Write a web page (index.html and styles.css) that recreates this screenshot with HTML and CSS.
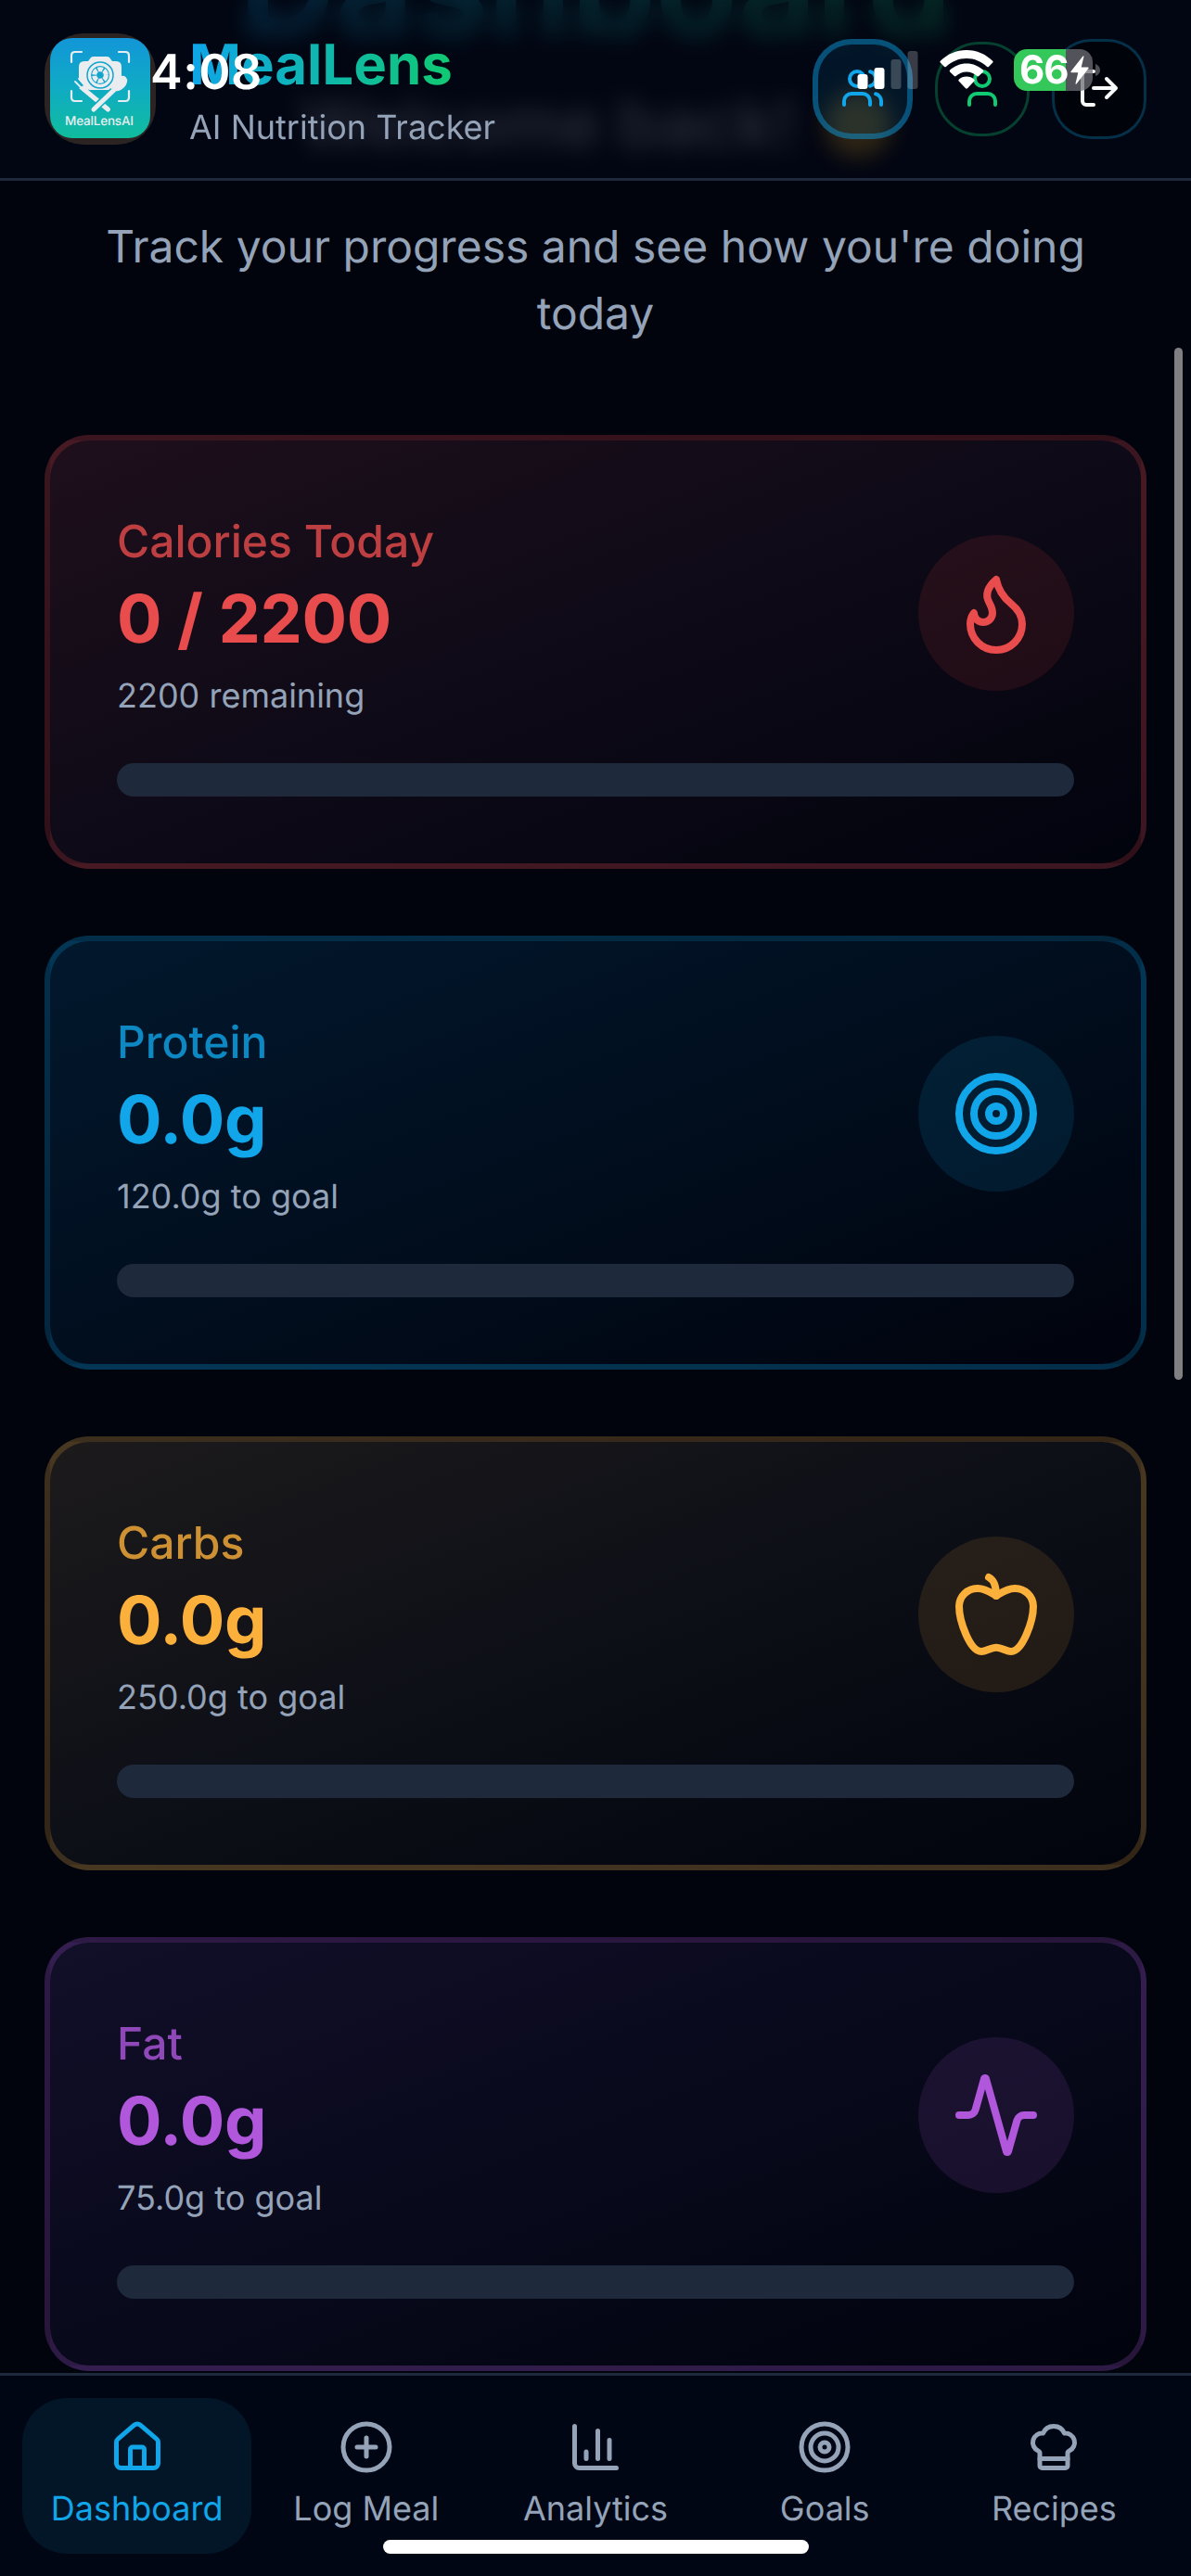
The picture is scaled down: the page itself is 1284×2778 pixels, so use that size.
FILE: index.html
```html
<!DOCTYPE html>
<html lang="en">
<head>
<meta charset="utf-8">
<title>MealLens</title>
<link rel="stylesheet" href="styles.css">
</head>
<body>
<div class="screen">
  <main class="content">
    <h1 class="page-title"><span class="page-title-text">Dashboard</span></h1>
    <p class="welcome">Welcome back! <span class="wave"></span></p>
    <p class="intro">Track your progress and see how you're doing today</p>

    <div class="cards">
      <section class="card card-red">
        <div class="card-top">
          <div class="card-text">
            <h2 class="card-label">Calories Today</h2>
            <p class="card-value">0 / 2200</p>
            <p class="card-note">2200 remaining</p>
          </div>
          <div class="card-icon"><svg class="icon" viewBox="0 0 24 24"><path d="M8.5 14.5A2.5 2.5 0 0 0 11 12c0-1.38-.5-2-1-3-1.072-2.143-.224-4.054 2-6 .5 2.5 2 4.9 4 6.5 2 1.6 3 3.5 3 5.5a7 7 0 1 1-14 0c0-1.153.433-2.294 1-3a2.5 2.5 0 0 0 2.5 2.5z"/></svg></div>
        </div>
        <div class="progress"></div>
      </section>

      <section class="card card-blue">
        <div class="card-top">
          <div class="card-text">
            <h2 class="card-label">Protein</h2>
            <p class="card-value">0.0g</p>
            <p class="card-note">120.0g to goal</p>
          </div>
          <div class="card-icon"><svg class="icon" viewBox="0 0 24 24"><circle cx="12" cy="12" r="10"/><circle cx="12" cy="12" r="6"/><circle cx="12" cy="12" r="2"/></svg></div>
        </div>
        <div class="progress"></div>
      </section>

      <section class="card card-orange">
        <div class="card-top">
          <div class="card-text">
            <h2 class="card-label">Carbs</h2>
            <p class="card-value">0.0g</p>
            <p class="card-note">250.0g to goal</p>
          </div>
          <div class="card-icon"><svg class="icon" viewBox="0 0 24 24"><path d="M12 20.94c1.5 0 2.75 1.06 4 1.06 3 0 6-8 6-12.22A4.91 4.91 0 0 0 17 5c-2.22 0-4 1.44-5 2-1-.56-2.78-2-5-2a4.9 4.9 0 0 0-5 4.78C2 14 5 22 8 22c1.25 0 2.5-1.06 4-1.06Z"/><path d="M10 2c1 .5 2 2 2 5"/></svg></div>
        </div>
        <div class="progress"></div>
      </section>

      <section class="card card-purple">
        <div class="card-top">
          <div class="card-text">
            <h2 class="card-label">Fat</h2>
            <p class="card-value">0.0g</p>
            <p class="card-note">75.0g to goal</p>
          </div>
          <div class="card-icon"><svg class="icon" viewBox="0 0 24 24"><path d="M22 12h-2.48a2 2 0 0 0-1.93 1.46l-2.35 8.36a.25.25 0 0 1-.48 0L9.24 2.18a.25.25 0 0 0-.48 0l-2.35 8.36A2 2 0 0 1 4.49 12H2"/></svg></div>
        </div>
        <div class="progress"></div>
      </section>
    </div>
  </main>

  <header class="header">
    <div class="brand">
      <div class="logo">
        <svg class="logo-art" viewBox="0 0 108 108">
          <defs>
            <linearGradient id="logoBg" x1="0" y1="0" x2="0" y2="1">
              <stop offset="0" stop-color="#1296d8"/>
              <stop offset="0.5" stop-color="#0fabc4"/>
              <stop offset="1" stop-color="#10bd9d"/>
            </linearGradient>
          </defs>
          <rect width="108" height="108" rx="24" fill="url(#logoBg)"/>
          <g fill="none" stroke="#e9edf0" stroke-width="2.2" stroke-linecap="round">
            <path d="M23 26v-7q0-4 4-4h7M74 15h7q4 0 4 4v7M85 57v7q0 4-4 4h-7M34 68h-7q-4 0-4-4v-7"/>
          </g>
          <path d="M37 25h4l3-4q1-1 3-1h14q2 0 3 1l3 4h4q6 0 6 6v10L66 56H42L31 45V31q0-6 6-6z" fill="#e9edf0"/>
          <circle cx="54" cy="40" r="14" fill="#e9edf0" stroke="#11a5cd" stroke-width="1.5"/>
          <circle cx="54" cy="40" r="10" fill="#11a5cd"/>
          <circle cx="54" cy="40" r="6.3" fill="none" stroke="#e9edf0" stroke-width="5" stroke-dasharray="5.4 1.2"/>
          <path d="M36 55l26.500 22" stroke="#e9edf0" stroke-width="5" stroke-linecap="round"/>
          <path d="M27 47l7 7M31 44l6 7M35 42l5 7" stroke="#e9edf0" stroke-width="1.800" stroke-linecap="round"/>
          <path d="M31 54q5 5 9 3q3-3 0-8z" fill="#e9edf0"/>
          <path d="M68 57L51 73" stroke="#10afc0" stroke-width="8"/>
          <path d="M70 55L47 77" stroke="#e9edf0" stroke-width="5" stroke-linecap="round"/>
          <ellipse cx="75" cy="49" rx="9.500" ry="6.500" transform="rotate(-45 75 49)" fill="#e9edf0"/>
          <text class="logo-name" x="53" y="94" text-anchor="middle" textLength="74">MealLensAI</text>
        </svg>
      </div>
      <div class="brand-text">
        <div class="brand-name">MealLens</div>
        <div class="brand-sub">AI Nutrition Tracker</div>
      </div>
    </div>
    <div class="actions">
      <button class="action action-users"><svg class="icon" viewBox="0 0 24 24"><path d="M16 21v-2a4 4 0 0 0-4-4H6a4 4 0 0 0-4 4v2"/><circle cx="9" cy="7" r="4"/><path d="M22 21v-2a4 4 0 0 0-3-3.870M16 3.130a4 4 0 0 1 0 7.750"/></svg></button>
      <button class="action action-user"><svg class="icon" viewBox="0 0 24 24"><path d="M19 21v-2a4 4 0 0 0-4-4H9a4 4 0 0 0-4 4v2"/><circle cx="12" cy="7" r="4"/></svg></button>
      <button class="action action-logout"><svg class="icon" viewBox="0 0 24 24"><path d="M9 21H5a2 2 0 0 1-2-2V5a2 2 0 0 1 2-2h4M16 17l5-5-5-5M21 12H9"/></svg></button>
    </div>
  </header>

  <div class="status">
    <div class="clock">4:08</div>
    <svg class="signal" viewBox="0 0 66 42"><rect x="0.500" y="25" width="11" height="16" rx="3" fill="#fff"/><rect x="18.500" y="18" width="11" height="23" rx="3" fill="#fff"/><rect x="36.500" y="9" width="11" height="32" rx="3" fill="#fff" fill-opacity=".22"/><rect x="54.500" y="0" width="11" height="41" rx="3" fill="#fff" fill-opacity=".22"/></svg>
    <svg class="wifi" viewBox="0 0 58 42"><path fill="#fff" d="M29 0C18 0 8 4.500 .8 11.800q-.8.900 0 1.800l4.300 4.300q.9.800 1.800 0C12.700 12.400 20.500 9 29 9s16.300 3.400 22.100 8.900q.9.800 1.800 0l4.300-4.300q.8-.900 0-1.800C50 4.500 40 0 29 0zM29 14.500c-7 0-13.200 2.700-17.900 7.100q-.8.900 0 1.800l4.700 4.600q.9.800 1.800 0C20.600 25.300 24.600 23.500 29 23.500s8.400 1.800 11.400 4.500q.9.800 1.800 0l4.700-4.600q.8-.900 0-1.800C42.200 17.200 36 14.500 29 14.500zM29 28.600c-3.200 0-6.100 1.200-8.300 3.200q-.8.900 0 1.700l7.300 7.800q1 .9 2 0l7.300-7.800q.8-.800 0-1.700c-2.200-2-5.100-3.200-8.300-3.200z"/></svg>
    <div class="battery">
      <div class="battery-body"><span class="battery-level">66</span><svg class="bolt" viewBox="0 0 20 31"><path fill="#fff" d="M13.500.5L.5 17q-.6 1.200.8 1.300h7L5.500 30q0 1 1 .4L19.500 13.800q.6-1.200-.8-1.300h-7L14.500 1q-.1-1-1-.5z"/></svg></div>
      <svg class="nub" viewBox="0 0 5 13"><path d="M0 0q5 2 5 6.500T0 13z" fill="#fff" fill-opacity=".3"/></svg>
    </div>
  </div>

  <div class="scrollbar"></div>

  <nav class="nav">
    <a class="nav-item nav-active"><svg class="icon" viewBox="0 0 24 24"><path d="M15 21v-8a1 1 0 0 0-1-1h-4a1 1 0 0 0-1 1v8"/><path d="M3 10a2 2 0 0 1 .709-1.528l7-5.999a2 2 0 0 1 2.582 0l7 5.999A2 2 0 0 1 21 10v9a2 2 0 0 1-2 2H5a2 2 0 0 1-2-2z"/></svg><span>Dashboard</span></a>
    <a class="nav-item"><svg class="icon" viewBox="0 0 24 24"><circle cx="12" cy="12" r="10"/><path d="M8 12h8M12 8v8"/></svg><span>Log Meal</span></a>
    <a class="nav-item"><svg class="icon" viewBox="0 0 24 24"><path d="M3 3v16a2 2 0 0 0 2 2h16M18 17V9M13 17V5M8 17v-3"/></svg><span>Analytics</span></a>
    <a class="nav-item"><svg class="icon" viewBox="0 0 24 24"><circle cx="12" cy="12" r="10"/><circle cx="12" cy="12" r="6"/><circle cx="12" cy="12" r="2"/></svg><span>Goals</span></a>
    <a class="nav-item"><svg class="icon" viewBox="0 0 24 24"><path d="M17 21a1 1 0 0 0 1-1v-5.350c0-.457.316-.844.727-1.041a4 4 0 0 0-2.134-7.589 5 5 0 0 0-9.186 0 4 4 0 0 0-2.134 7.588c.411.198.727.585.727 1.041V20a1 1 0 0 0 1 1Z"/><path d="M6 17h12"/></svg><span>Recipes</span></a>
  </nav>
  <div class="home-bar"></div>
</div>
</body>
</html>
```

FILE: styles.css
```css
* { box-sizing: border-box; }

body {
  margin: 0;
  background: #01040c;
  color: #94a3b8;
  font-family: Inter, "Liberation Sans", sans-serif;
  text-rendering: geometricPrecision;
}

h1, h2, p { margin: 0; }

.screen {
  position: relative;
  width: 1284px;
  height: 2778px;
  overflow: hidden;
  background: #01040c;
}

.icon {
  display: block;
  fill: none;
  stroke: currentColor;
  stroke-width: 2;
  stroke-linecap: round;
  stroke-linejoin: round;
}

/* Scrolled page content */
.content {
  display: flow-root;
  margin-top: -86px;
  padding: 0 48px;
}

.page-title {
  font-size: 144px;
  line-height: 144px;
  font-weight: 700;
  text-align: center;
}

.page-title-text {
  background: linear-gradient(90deg, #0ea5e9, #10c972);
  -webkit-background-clip: text;
  background-clip: text;
  color: transparent;
}

.welcome {
  display: flex;
  justify-content: center;
  align-items: center;
  gap: 30px;
  margin-top: 22px;
  font-size: 72px;
  line-height: 108px;
  font-weight: 600;
  color: #cbd5e1;
}

.wave {
  width: 72px;
  height: 72px;
  border-radius: 50%;
  background: #f5b31c;
}

.intro {
  margin-top: 42px;
  font-size: 48px;
  line-height: 72px;
  text-align: center;
}

.cards {
  display: flex;
  flex-direction: column;
  gap: 72px;
  margin-top: 95px;
}

.card {
  height: 468px;
  padding: 72px;
  border: 6px solid var(--edge);
  border-radius: 48px;
  background-color: #01030d;
  background-image: linear-gradient(to bottom right, var(--tint), var(--mid) 50%, #01030d);
}

.card-red { --tone: #e84c4c; --edge: rgba(239, 68, 68, .2); --tint: #1e0f1b; --mid: #0e0a17; --disc: rgba(239, 68, 68, .11); }
.card-blue { --tone: #11a5e9; --edge: rgba(14, 165, 233, .22); --tint: #02182d; --mid: #010e1e; --disc: rgba(14, 165, 233, .12); }
.card-orange { --tone: #fbb03b; --edge: rgba(251, 176, 59, .2); --tint: #1c1a1b; --mid: #0d0f17; --disc: rgba(251, 176, 59, .11); }
.card-purple { --tone: #b057dc; --edge: rgba(176, 87, 220, .22); --tint: #120f29; --mid: #08091b; --disc: rgba(176, 87, 220, .12); }

.card-top {
  display: flex;
  align-items: center;
  justify-content: space-between;
}

.card-text { padding-top: 1px; }

.card-label {
  font-size: 48px;
  line-height: 72px;
  font-weight: 500;
  color: var(--tone);
  opacity: .8;
}

.card-value {
  margin-top: 12px;
  font-size: 72px;
  line-height: 72px;
  font-weight: 700;
  letter-spacing: -.3px;
  color: var(--tone);
}

.card-note {
  margin-top: 22px;
  font-size: 36px;
  line-height: 49px;
}

.card-icon {
  display: flex;
  align-items: center;
  justify-content: center;
  width: 168px;
  height: 168px;
  border-radius: 50%;
  background: var(--disc);
  color: var(--tone);
}

.card-icon .icon { width: 96px; height: 96px; }

.progress {
  height: 36px;
  margin-top: 48px;
  border-radius: 18px;
  background: #1e293b;
}

/* Top bar */
.header {
  position: absolute;
  top: 0;
  left: 0;
  right: 0;
  height: 195px;
  padding: 36px 48px 0;
  display: flex;
  align-items: flex-start;
  justify-content: space-between;
  border-bottom: 3px solid #1e293b;
  background: rgba(2, 6, 20, .82);
  -webkit-backdrop-filter: blur(12px);
  backdrop-filter: blur(12px);
}

.brand { display: flex; gap: 36px; }

.logo {
  width: 120px;
  height: 120px;
  padding: 5px 6px 7px;
  border-radius: 42px;
  background: #2b2423;
}

.logo-art { display: block; width: 108px; height: 108px; }

.logo-name {
  font: 500 13.5px Inter, sans-serif;
  fill: #e9edf0;
}

.brand-name {
  width: max-content;
  margin-top: -2px;
  font-size: 60px;
  line-height: 72px;
  font-weight: 700;
  background: linear-gradient(90deg, #0ea5e9, #10c972);
  -webkit-background-clip: text;
  background-clip: text;
  color: transparent;
}

.brand-sub {
  margin-top: 1px;
  font-size: 36px;
  line-height: 60px;
}

.actions {
  display: flex;
  align-items: center;
  gap: 24px;
  margin-top: 6px;
}

.action {
  display: flex;
  align-items: center;
  justify-content: center;
  padding: 0 0 2px;
  width: 102px;
  height: 108px;
  border: 3px solid;
  border-radius: 42px;
  background: none;
}

.action .icon { width: 48px; height: 48px; flex: none; }

.action-users {
  width: 108px;
  border: 6px solid rgba(14, 165, 233, .42);
  background: rgba(14, 165, 233, .1);
}
.action-users .icon { color: #11a5e9; }

.action-user {
  height: 102px;
  border-color: rgba(16, 201, 114, .3);
  border-radius: 48px;
}
.action-user .icon { color: #10c972; }

.action-logout {
  border-color: rgba(14, 165, 233, .28);
  background: #01030a;
}
.action-logout .icon { color: #f8fafc; }

/* Device status bar, drawn over the app */
.status {
  position: absolute;
  top: 53px;
  left: 162px;
  width: 1024px;
  display: flex;
  align-items: flex-start;
  color: #fff;
}

.clock {
  width: 762px;
  padding-top: 4px;
  font-size: 52px;
  line-height: 42px;
  font-weight: 600;
  letter-spacing: .5px;
}

.signal { width: 66px; height: 42px; margin: 2px 23px 0 0; }
.wifi { width: 58px; height: 42px; margin: 1px 22px 0 0; }

.battery { display: flex; align-items: center; gap: 3px; }

.battery-body {
  display: flex;
  align-items: center;
  gap: 2px;
  width: 85px;
  height: 45px;
  padding-left: 6px;
  border-radius: 14px;
  background: linear-gradient(90deg, #34c759 56px, rgba(110, 110, 118, .75) 56px);
}

.battery-level {
  width: 53px;
  font-size: 42px;
  line-height: 45px;
  font-weight: 700;
  letter-spacing: -1px;
}

.bolt { width: 20px; height: 31px; }
.nub { width: 5px; height: 13px; }

.scrollbar {
  position: absolute;
  top: 375px;
  left: 1266px;
  width: 9px;
  height: 1113px;
  border-radius: 5px;
  background: #808083;
}

/* Bottom tabs */
.nav {
  position: absolute;
  left: 0;
  right: 0;
  bottom: 0;
  height: 219px;
  padding: 24px;
  display: grid;
  grid-template-columns: repeat(5, 1fr);
  border-top: 3px solid #1e293b;
  background: #010614;
}

.nav-item {
  height: 168px;
  padding-top: 23px;
  display: flex;
  flex-direction: column;
  align-items: center;
  gap: 9px;
  border-radius: 48px;
  font-size: 36px;
  line-height: 54px;
}

.nav-item .icon { width: 60px; height: 60px; }

.nav-active {
  background: #021627;
  color: #11a5e9;
}

.home-bar {
  position: absolute;
  left: 413px;
  bottom: 24px;
  width: 459px;
  height: 15px;
  border-radius: 8px;
  background: #fff;
}
```
